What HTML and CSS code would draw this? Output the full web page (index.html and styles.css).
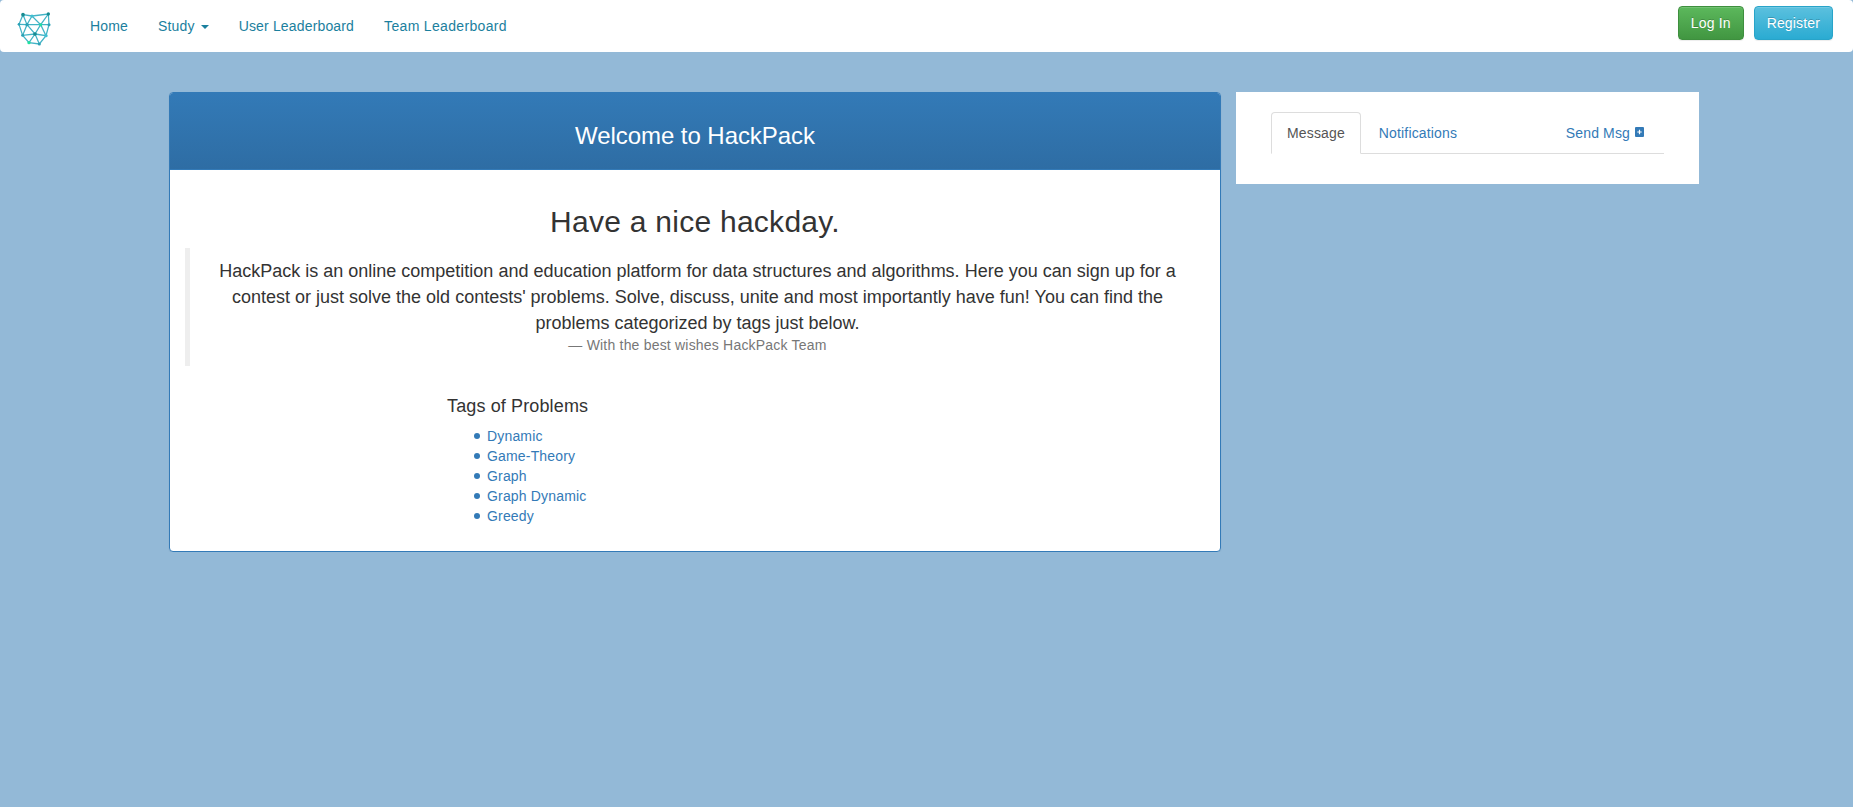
FILE: index.html
```html
<!DOCTYPE html>
<html lang="en">
<head>
<meta charset="utf-8">
<title>HackPack</title>
<link rel="stylesheet" href="styles.css">
</head>
<body>
<nav class="navbar">
  <a class="brand" href="#" aria-label="HackPack">
    <svg class="logo" viewBox="0 0 105 105">
      <g class="mesh">
        <path d="M18 8 45 12 94 6 96 38 87 71 67 96 36 92 17 70 6 37Z"/>
        <path d="M18 8 30 38 45 12 71 38 94 6M6 37 30 38 71 38 96 38M30 38 17 70 54 66 87 71 71 38 54 66 30 38M54 66 36 92M54 66 67 96"/>
      </g>
      <g class="deep"><circle cx="18" cy="8" r="5.5"/><circle cx="94" cy="6" r="5"/><circle cx="54" cy="66" r="5.5"/></g>
      <g class="teal"><circle cx="6" cy="37" r="4"/><circle cx="30" cy="38" r="5"/><circle cx="96" cy="38" r="4.5"/><circle cx="17" cy="70" r="4.5"/><circle cx="67" cy="96" r="4.5"/></g>
      <g class="sky"><circle cx="45" cy="12" r="4.5"/><circle cx="87" cy="71" r="5"/></g>
      <g class="mint"><circle cx="71" cy="38" r="4.5"/><circle cx="36" cy="92" r="5"/></g>
    </svg>
  </a>
  <div class="nav-links">
    <a href="#">Home</a>
    <a href="#">Study <span class="caret"></span></a>
    <a href="#">User Leaderboard</a>
    <a class="team" href="#">Team Leaderboard</a>
  </div>
  <div class="nav-actions">
    <a class="btn btn-success" href="#">Log In</a>
    <a class="btn btn-info" href="#">Register</a>
  </div>
</nav>
<div class="page">
  <main class="panel">
    <header class="panel-heading"><h3>Welcome to HackPack</h3></header>
    <div class="panel-body">
      <h2>Have a nice hackday.</h2>
      <blockquote>
        <p>HackPack is an online competition and education platform for data structures and algorithms. Here you can sign up for a contest or just solve the old contests' problems. Solve, discuss, unite and most importantly have fun! You can find the problems categorized by tags just below.</p>
        <small>— With the best wishes HackPack Team</small>
      </blockquote>
      <section class="tags">
        <h4>Tags of Problems</h4>
        <ul>
          <li><a href="#">Dynamic</a></li>
          <li><a href="#">Game-Theory</a></li>
          <li><a href="#">Graph</a></li>
          <li><a href="#">Graph Dynamic</a></li>
          <li><a href="#">Greedy</a></li>
        </ul>
      </section>
    </div>
  </main>
  <aside class="messages">
    <div class="tabs">
      <a class="tab active" href="#">Message</a>
      <a class="tab" href="#">Notifications</a>
      <a class="tab send" href="#">Send Msg <svg class="plus" viewBox="0 0 14 14"><rect x="1" y="2" width="9" height="10" rx="1"/><path d="M5.5 4.8v4.4M3.3 7h4.4"/></svg></a>
    </div>
  </aside>
</div>
</body>
</html>
```

FILE: styles.css
```css
* { box-sizing: border-box; }

body {
  margin: 0;
  background: #93b9d7;
  color: #333;
  font: 14px/20px "Liberation Sans", Arial, sans-serif;
}

a { color: #337ab7; text-decoration: none; }

.navbar {
  display: flex;
  height: 52px;
  padding: 0 20px 0 15px;
  background: #fff;
  border-radius: 4px;
}
.brand { width: 60px; padding-top: 12px; }
.logo { display: block; width: 35px; height: 35px; margin-left: 1.5px; }
.mesh { fill: none; stroke: #42b3c6; stroke-width: 3.8; }
.deep { fill: #168b91; }
.teal { fill: #2ba1b5; }
.sky { fill: #3fbfd2; }
.mint { fill: #20e0a0; }

.nav-links { display: flex; }
.nav-links a { padding: 16px 15px; color: #1b809e; letter-spacing: .16px; }
.nav-links .team { letter-spacing: .33px; }
.caret {
  display: inline-block;
  margin-left: 2px;
  vertical-align: middle;
  border-top: 4px solid;
  border-right: 4px solid transparent;
  border-left: 4px solid transparent;
}

.nav-actions { display: flex; gap: 10px; margin-left: auto; padding-top: 6px; }
.btn {
  height: 34px;
  padding: 6px 12px;
  border: 1px solid;
  border-radius: 4px;
  color: #fff;
  letter-spacing: .15px;
  text-shadow: 0 -1px 0 rgba(0, 0, 0, .2);
  box-shadow: inset 0 1px 0 rgba(255, 255, 255, .15), 0 1px 1px rgba(0, 0, 0, .075);
}
.btn-success { background: linear-gradient(#5cb85c, #419641); border-color: #3e8f3e; }
.btn-info { background: linear-gradient(#5bc0de, #2aabd2); border-color: #28a4c9; }

.page {
  display: flex;
  align-items: flex-start;
  gap: 15px;
  padding: 40px 154px 0 169px;
}

.panel {
  width: 1052px;
  background: #fff;
  border: 1px solid #337ab7;
  border-radius: 4px;
  box-shadow: 0 1px 2px rgba(0, 0, 0, .05);
}
.panel-heading {
  padding: 30px 15px 20px;
  background: linear-gradient(#337ab7, #2e6da4);
  border-bottom: 1px solid #337ab7;
  border-radius: 3px 3px 0 0;
  color: #fff;
  text-align: center;
}
h2, h3, h4, p { margin: 0; font-weight: 400; }
h3 { font-size: 24px; line-height: 26px; letter-spacing: -.06px; }
.panel-body { padding: 35px 15px 25px; }
h2 { font-size: 30px; line-height: 33px; letter-spacing: .26px; text-align: center; }

blockquote {
  height: 118px;
  margin: 10px 0 30px;
  padding: 10px 20px;
  border-left: 5px solid #eee;
  text-align: center;
}
blockquote p { font-size: 18px; line-height: 26px; }
blockquote small { display: block; color: #777; font-size: 14px; line-height: 18px; letter-spacing: .2px; }

.tags { padding-left: 262px; }
h4 { font-size: 18px; line-height: 20px; letter-spacing: .13px; }
.tags ul { margin: 10px 0 0; padding-left: 27px; list-style: none; }
.tags li { display: flex; align-items: center; gap: 7px; letter-spacing: .17px; }
.tags li::before { content: ""; width: 6px; height: 6px; border-radius: 50%; background: #337ab7; }

.messages {
  width: 463px;
  height: 92px;
  padding: 20px 35px 30px;
  background: #fff;
}
.tabs { display: flex; gap: 2px; height: 42px; border-bottom: 1px solid #ddd; }
.tab { height: 42px; padding: 11px 16px; letter-spacing: .15px; }
.tab.active {
  padding: 10px 15px;
  border: 1px solid #ddd;
  border-bottom-color: #fff;
  border-radius: 4px 4px 0 0;
  background: #fff;
  color: #555;
}
.send { display: flex; gap: 4px; margin-left: auto; }
.plus { flex: none; width: 14px; height: 14px; margin-top: 2px; fill: #337ab7; }
.plus path { stroke: #fff; stroke-width: 1.2; }
```
